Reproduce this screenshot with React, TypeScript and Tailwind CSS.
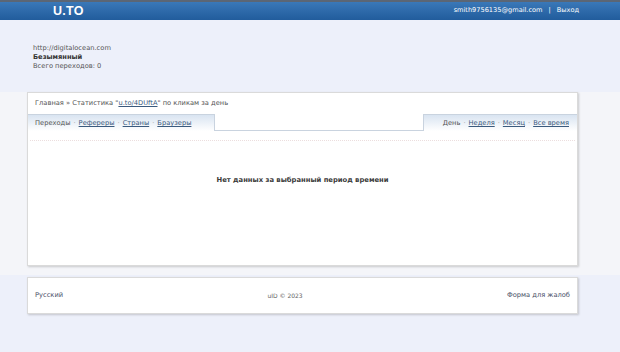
export default function App() {
  return (
    <div className="min-h-[352px] bg-[#edf0fa] font-['DejaVu_Sans',Verdana,sans-serif] text-[#444]">
      {/* top bar */}
      <header className="h-[20px] border-t-2 border-[#5b6675] bg-gradient-to-b from-[#3a78b8] to-[#215c9c] flex items-center justify-between pl-[53px] pr-[41px]">
        <div className="text-white font-bold text-[12.5px] tracking-[0.3px] font-['Liberation_Sans',Arial,sans-serif]">U.TO</div>
        <div className="flex items-center gap-[6px] text-white text-[6.6px]">
          <span>smith9756135@gmail.com</span>
          <span>|</span>
          <span>Выход</span>
        </div>
      </header>

      {/* link info */}
      <div className="h-[72px] pl-[33px] pt-[24px] text-[6.7px] leading-[9px] text-[#555]">
        <div>http://digitalocean.com</div>
        <div className="font-bold text-[#333]">Безымянный</div>
        <div>Всего переходов: 0</div>
      </div>

      {/* main band */}
      <div className="bg-[#f4f5f9] pb-[9px]">
        <div className="ml-[27px] w-[551px] h-[174px] bg-white border border-[#dadada] shadow-[1px_1px_2px_rgba(0,0,0,0.18)] flex flex-col">
          <div className="h-[21px] pl-[7px] flex items-center text-[6.7px] text-[#555]">
            Главная » Статистика "<a className="underline text-[#3a5a7e]">u.to/4DUftA</a>" по кликам за день
          </div>

          <div className="flex h-[17px] text-[6.7px]">
            <div className="w-[187px] bg-gradient-to-b from-[#d9e4f1] to-white border-t border-r border-[#c9d3df] flex items-center pl-[7px] gap-[3px] text-[#555]">
              <span>Переходы</span>
              <span className="text-[#999]">·</span>
              <a className="underline text-[#3a5a7e]">Рефереры</a>
              <span className="text-[#999]">·</span>
              <a className="underline text-[#3a5a7e]">Страны</a>
              <span className="text-[#999]">·</span>
              <a className="underline text-[#3a5a7e]">Браузеры</a>
            </div>
            <div className="flex-1 border-b border-[#c9d3df]" />
            <div className="w-[154px] bg-gradient-to-b from-[#d9e4f1] to-white border-t border-l border-[#c9d3df] flex items-center justify-end pr-[8px] gap-[3px] text-[#555]">
              <span>День</span>
              <span className="text-[#999]">·</span>
              <a className="underline text-[#3a5a7e]">Неделя</a>
              <span className="text-[#999]">·</span>
              <a className="underline text-[#3a5a7e]">Месяц</a>
              <span className="text-[#999]">·</span>
              <a className="underline text-[#3a5a7e]">Все время</a>
            </div>
          </div>

          <div className="mt-[9px] mx-[2px] border-t border-dotted border-[#ecdede]" />

          <div className="flex-1 flex justify-center pt-[34px]">
            <div className="font-bold text-[6.8px] text-[#3a3a3a]">Нет данных за выбранный период времени</div>
          </div>
        </div>
      </div>

      {/* footer */}
      <div className="pt-[2px]">
        <div className="ml-[27px] w-[551px] h-[37px] bg-white border border-[#dadada] shadow-[1px_1px_2px_rgba(0,0,0,0.18)] flex items-center justify-between px-[7px] text-[6.7px]">
          <a className="text-[#4a5068]">Русский</a>
          <span className="text-[#666] text-[6px]">uID © 2023</span>
          <a className="text-[#4a5068]">Форма для жалоб</a>
        </div>
      </div>
    </div>
  );
}
